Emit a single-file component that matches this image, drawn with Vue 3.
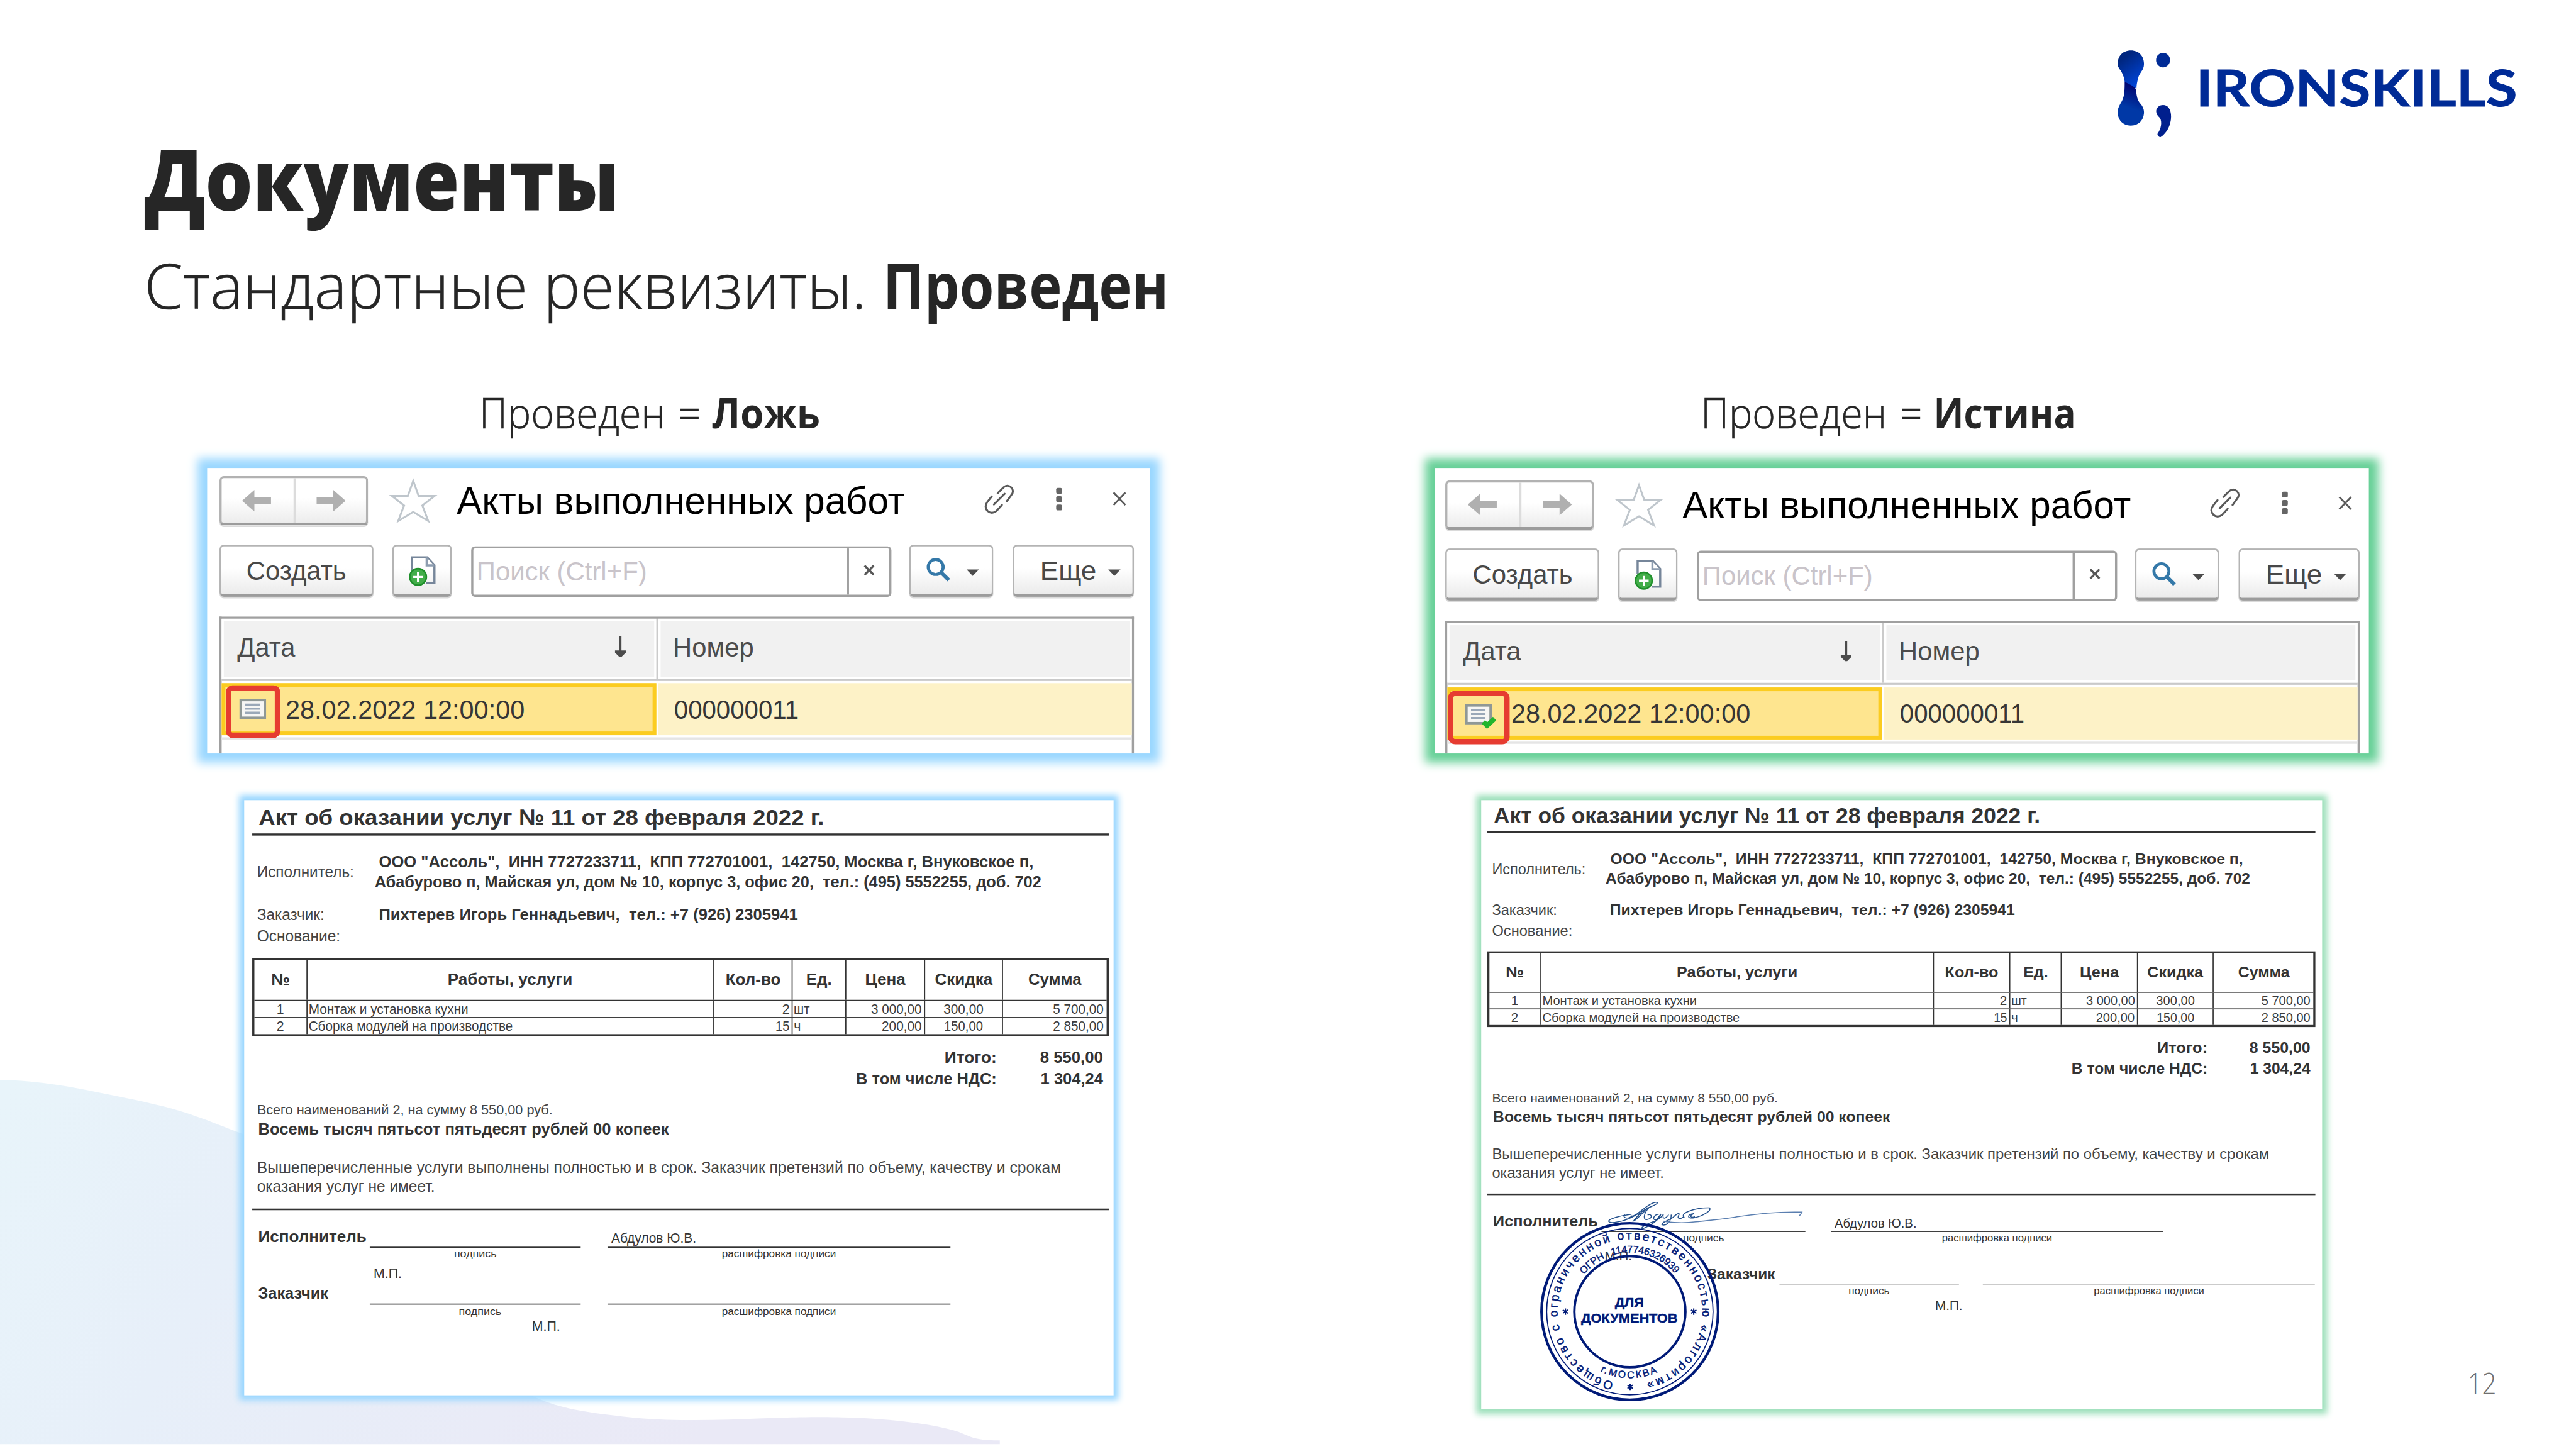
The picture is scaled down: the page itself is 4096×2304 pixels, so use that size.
<script setup>
// Stretches a text run horizontally so that its glyphs span the given width.
const fit = (el, { value }) => {
  if (!value) return
  const size = parseFloat(getComputedStyle(el).fontSize)
  const natural = el.offsetWidth
  const target = value + size * 0.085
  el.style.transform = `scaleX(${(target / natural).toFixed(4)})`
  el.style.marginRight = `${(target - natural).toFixed(2)}px`
}
const vFit = { mounted: fit }

const columns = [
  { id: 'draft', value: 'Ложь', valueWidth: 194, posted: false },
  { id: 'posted', value: 'Истина', valueWidth: 258, posted: true }
]

const sellerLines = [
  { text: 'ООО "Ассоль",  ИНН 7727233711,  КПП 772701001,  142750, Москва г, Внуковское п,', w: 1217, indent: 8.5 },
  { text: 'Абабурово п, Майская ул, дом № 10, корпус 3, офис 20,  тел.: (495) 5552255, доб. 702', w: 1240, indent: 0 }
]

const heads = [
  { t: '№', w: 32 },
  { t: 'Работы, услуги', w: 230 },
  { t: 'Кол-во', w: 100 },
  { t: 'Ед.', w: 45 },
  { t: 'Цена', w: 73 },
  { t: 'Скидка', w: 105 },
  { t: 'Сумма', w: 97 }
]
const rows = [
  [{ t: '1' }, { t: 'Монтаж и установка кухни', w: 296 }, { t: '2' }, { t: 'шт', w: 28 }, { t: '3 000,00', w: 92 }, { t: '300,00', w: 72 }, { t: '5 700,00', w: 92 }],
  [{ t: '2' }, { t: 'Сборка модулей на производстве', w: 378 }, { t: '15', w: 24 }, { t: 'ч' }, { t: '200,00', w: 72 }, { t: '150,00', w: 70 }, { t: '2 850,00', w: 92 }]
]
const totals = [
  { label: 'Итого:', lw: 95, value: '8 550,00', vw: 115 },
  { label: 'В том числе НДС:', lw: 260, value: '1 304,24', vw: 114 }
]
</script>

<template>
  <div class="viewport">
    <main class="slide">
      <svg class="blob" viewBox="0 0 1900 700" aria-hidden="true">
        <defs>
          <linearGradient id="blobFill" gradientUnits="userSpaceOnUse" x1="0" y1="60" x2="1250" y2="780">
            <stop offset="0" stop-color="#e8f4fa" />
            <stop offset="0.35" stop-color="#e7eff9" />
            <stop offset="0.75" stop-color="#e9ebf7" />
            <stop offset="1" stop-color="#eae9f6" />
          </linearGradient>
        </defs>
        <path fill="url(#blobFill)" d="M0 12 C50 13 110 20 166 32 C235 46 290 56 345 73 C390 88 420 101 453 113 C640 200 800 480 992 601 C1035 622 1080 630 1148 638 C1230 649 1330 647 1420 643 C1500 640 1540 640 1569 641 C1640 642 1740 652 1786 668 C1810 677 1815 684 1863 684 V691 H0Z" />
      </svg>

      <header class="head">
        <div class="titles">
          <h1><span v-fit="871">Документы</span></h1>
          <p class="subtitle">
            <span class="plain"><span v-fit="1335">Стандартные реквизиты.</span></span>
            <b v-fit="523">Проведен</b>
          </p>
        </div>
        <div class="logo">
          <svg viewBox="3945 90 106 170" aria-hidden="true">
            <defs>
              <linearGradient id="boneTop" x1="0" y1="0" x2="0.5" y2="1">
                <stop offset="0.25" stop-color="#00267f" /><stop offset="1" stop-color="#0044d6" />
              </linearGradient>
              <linearGradient id="boneBottom" x1="0.6" y1="0" x2="0.4" y2="1">
                <stop offset="0.08" stop-color="#000673" /><stop offset="0.6" stop-color="#0038a6" />
              </linearGradient>
            </defs>
            <path fill="url(#boneTop)" d="M3971.500 94 C3987 94 3996 105 3996 119 C3996 132 3988 134 3985 146 C3983 154 3982 159 3982 165 L3960 153 C3960 147 3957 139 3953 132 C3949 127 3947 124 3947 119 C3947 105 3956 94 3971.500 94Z" />
            <path fill="url(#boneBottom)" d="M3960 153 C3966 155 3978 161 3981 166 C3982 176 3983 184 3987 190 C3992 196 3996 201 3996 209 C3996 223 3987 234 3971.500 234 C3956 234 3947 223 3947 209 C3947 201 3951 195 3955 188 C3960 179 3960 165 3960 153Z" />
            <ellipse cx="4031.500" cy="112" rx="13" ry="13.700" fill="#002b96" />
            <path fill="#001f8d" d="M4031.500 195.700 C4041 195.700 4046.500 204 4046.500 217 C4046.500 234 4038 248 4027 255.500 Q4022 255.500 4021 249.500 C4028 240 4030 228 4026 220 C4021 216 4018.700 212 4018.700 207.500 C4018.700 201 4024 195.700 4031.500 195.700Z" />
          </svg>
          <div class="wordmark"><span v-fit="590">IRONSKILLS</span></div>
        </div>
      </header>

      <section class="columns">
        <article v-for="c in columns" :key="c.id" class="column" :class="c.id">
          <h2>
            <span class="plain"><span v-fit="340">Проведен</span></span><span class="eq"><span v-fit="36">=</span></span><b v-fit="c.valueWidth">{{ c.value }}</b>
          </h2>

          <div class="window">
            <div class="window-title">
              <div class="nav">
                <svg viewBox="0 0 54 40"><path d="M0 20 L23 0 V14 H54 V26 H23 V40Z" /></svg>
                <svg viewBox="0 0 54 40"><path d="M54 20 L31 0 V14 H0 V26 H31 V40Z" /></svg>
              </div>
              <svg class="star" viewBox="0 0 86 82"><path d="M43 4 L53 32 H83 L60 50 L71 79 L43 62 L15 79 L26 50 L3 32 H33Z" /></svg>
              <div class="caption"><span v-fit="829">Акты выполненных работ</span></div>
              <svg class="link" viewBox="0 0 56 56">
                <path d="M18 38 L38 18 M25 17 L36 6 Q43 0 50 6 Q57 13 50 21 L42 32 M14 23 L6 33 Q-1 42 6 50 Q14 57 23 50 L33 39" />
              </svg>
              <svg class="dots" viewBox="0 0 11 42"><rect y="0" width="11" height="11" rx="3" /><rect y="15.500" width="11" height="11" rx="3" /><rect y="31" width="11" height="11" rx="3" /></svg>
              <svg class="close" viewBox="0 0 26 27"><path d="M2 2 L24 25 M24 2 L2 25" /></svg>
            </div>

            <div class="toolbar">
              <div class="btn create"><span v-fit="182">Создать</span></div>
              <div class="btn copy">
                <svg viewBox="0 0 50 56">
                  <path class="sheet-line" d="M5.500 26 V2.500 H34 L47.500 17 V50 H32" />
                  <path class="sheet-fold" d="M33 3 V17.500 H47" />
                  <circle cx="17" cy="39" r="15.500" />
                  <path class="plus" d="M17 30 V48 M8 39 H26" />
                </svg>
              </div>
              <div class="search">
                <div class="hint"><span v-fit="313">Поиск (Ctrl+F)</span></div>
                <div class="clear"><svg viewBox="0 0 21 21"><path d="M2 2 L19 19 M19 2 L2 19" /></svg></div>
              </div>
              <div class="btn find">
                <svg class="lens" viewBox="0 0 45 46"><circle cx="17.500" cy="17.500" r="14" /><path d="M28 28 L42 42" /></svg>
                <svg class="tri" viewBox="0 0 23 12"><path d="M0 0 H23 L11.500 12Z" /></svg>
              </div>
              <div class="btn more">
                <span v-fit="101">Еще</span>
                <svg class="tri" viewBox="0 0 23 12"><path d="M0 0 H23 L11.500 12Z" /></svg>
              </div>
            </div>

            <div class="list">
              <div class="list-head">
                <div class="cell date">
                  <span v-fit="104">Дата</span>
                  <svg class="sort" viewBox="0 0 20 38"><path d="M8 0 H12 V26 H20 V30 L12 38 H8 L0 30 V26 H8Z" /></svg>
                </div>
                <div class="cell number"><span v-fit="146">Номер</span></div>
              </div>
              <div class="list-row">
                <div class="cell date">
                  <div class="mark">
                    <svg viewBox="0 0 60 48">
                      <rect class="page" x="2.500" y="2.500" width="45" height="33" />
                      <path class="lines" d="M11 11 H38 M11 18.500 H38 M11 26 H38" />
                      <path v-if="c.posted" class="tick" d="M34 33 L41 40 L55 27" />
                    </svg>
                  </div>
                  <span v-fit="441">28.02.2022 12:00:00</span>
                </div>
                <div class="cell number"><span v-fit="228">000000011</span></div>
              </div>
              <div class="list-line"></div>
            </div>
          </div>

          <div class="sheet">
            <div class="act">
              <h3><span v-fit="1050">Акт об оказании услуг № 11 от 28 февраля 2022 г.</span></h3>
              <div class="rule first"></div>

              <div class="party seller">
                <span class="who"><span v-fit="178">Исполнитель:</span></span>
                <div class="details">
                  <div v-for="l in sellerLines" :key="l.w" :style="{ paddingLeft: l.indent + 'px' }"><span v-fit="l.w">{{ l.text }}</span></div>
                </div>
              </div>
              <div class="party buyer">
                <span class="who"><span v-fit="122.500">Заказчик:</span></span>
                <div class="details offset"><span v-fit="778">{{ 'Пихтерев Игорь Геннадьевич,  тел.: +7 (926) 2305941' }}</span></div>
              </div>
              <div class="party"><span class="who"><span v-fit="153">Основание:</span></span></div>

              <div class="grid">
                <div class="grid-row grid-head">
                  <div v-for="h in heads" :key="h.t"><span v-fit="h.w">{{ h.t }}</span></div>
                </div>
                <div v-for="(r, i) in rows" :key="i" class="grid-row grid-body">
                  <div v-for="(v, j) in r" :key="j"><span v-fit="v.w">{{ v.t }}</span></div>
                </div>
              </div>

              <div class="totals">
                <div v-for="t in totals" :key="t.label">
                  <span class="total-label"><span v-fit="t.lw">{{ t.label }}</span></span>
                  <span class="total-value"><span v-fit="t.vw">{{ t.value }}</span></span>
                </div>
              </div>

              <p class="count"><span v-fit="549">Всего наименований 2, на сумму 8 550,00 руб.</span></p>
              <p class="words"><span v-fit="763">Восемь тысяч пятьсот пятьдесят рублей 00 копеек</span></p>
              <p class="terms">
                <span v-fit="1496">Вышеперечисленные услуги выполнены полностью и в срок. Заказчик претензий по объему, качеству и срокам</span><br />
                <span v-fit="329">оказания услуг не имеет.</span>
              </p>
              <div class="rule second"></div>

              <div class="sign performer">
                <b><span v-fit="199">Исполнитель</span></b>
                <i class="line hand"></i>
                <i class="line name"><span v-fit="156">Абдулов Ю.В.</span></i>
              </div>
              <div class="sign-notes performer">
                <span><span v-fit="78">подпись</span></span>
                <span><span v-fit="211">расшифровка подписи</span></span>
              </div>
              <div class="seal-place"><span v-fit="51">М.П.</span></div>
              <div class="sign customer">
                <b><span v-fit="128">Заказчик</span></b>
                <i class="line hand"></i>
                <i class="line name"></i>
              </div>
              <div class="sign-notes customer">
                <span><span v-fit="78">подпись</span></span>
                <span><span v-fit="211">расшифровка подписи</span></span>
              </div>
              <div class="seal-place last"><span v-fit="51">М.П.</span></div>
            </div>

            <svg v-if="c.posted" class="stamp" viewBox="2860 2220 510 400">
              <g class="signature" transform="translate(2840 2210) scale(.33333)">
                <path d="M600 158 C540 165 466 185 473 198 C480 212 560 200 615 168 C655 140 715 82 745 92 C748 106 690 116 655 146 C640 162 618 186 612 195 C625 190 650 166 690 120" />
                <path d="M562 158 C545 180 585 188 605 165 M588 178 C610 165 640 150 680 148 M700 118 C665 155 662 195 692 186 C722 176 712 152 690 162" />
                <path d="M752 158 C722 160 712 196 742 186 L765 156 C755 190 705 222 665 238 C640 240 680 212 725 198 C755 188 775 165 778 158 C770 186 790 186 808 160 M822 160 C824 200 792 226 770 216 C768 202 800 196 832 176 C850 155 872 146 866 160 C850 184 872 186 892 172" />
                <path d="M896 176 C862 152 960 120 1036 122 C1052 136 1000 168 950 178 C910 184 908 160 948 154 C920 166 930 180 955 172" />
                <path class="tail" d="M780 196 C820 206 900 208 960 200 C1050 190 1130 184 1190 172 C1280 160 1400 142 1553 146 C1550 152 1546 158 1538 167" />
              </g>
              <g class="seal" transform="translate(3037 2444)">
                <defs>
                  <path id="ringOuter" d="M-30.400 131.500 A135 135 0 1 1 26.900 132.300" />
                  <path id="ringInner" d="M-85.500 -69.200 A110 110 0 0 1 84.900 -70" />
                  <path id="ringCity" d="M-55.300 111 A124 124 0 0 0 52.400 112.400" />
                </defs>
                <circle r="164.500" stroke-width="5" />
                <circle r="155" stroke-width="2" />
                <circle r="103.500" stroke-width="4.500" />
                <text class="ring"><textPath href="#ringOuter" textLength="786">Общество с ограниченной ответственностью «Алгоритм»</textPath></text>
                <text class="code"><textPath href="#ringInner" textLength="50">ОГРН</textPath></text>
                <text class="code"><textPath href="#ringInner" startOffset="64" textLength="130">1147746326939</textPath></text>
                <text class="city"><textPath href="#ringCity" textLength="110">г.МОСКВА</textPath></text>
                <text class="core" x="-1" y="-8.500" text-anchor="middle" textLength="54" lengthAdjust="spacingAndGlyphs">ДЛЯ</text>
                <text class="core" x="-1" y="21" text-anchor="middle" textLength="180" lengthAdjust="spacingAndGlyphs">ДОКУМЕНТОВ</text>
                <path class="asterisk" d="M-120 -6 V6 M-125 -3 L-115 3 M-125 3 L-115 -3 M119 -6 V6 M114 -3 L124 3 M114 3 L124 -3 M.500 134 V146 M-4.500 137 L5.500 143 M-4.500 143 L5.500 137" />
              </g>
            </svg>
          </div>
        </article>
      </section>

      <div class="page-number"><span v-fit="49">12</span></div>
    </main>
  </div>
</template>

<style>
html, body { margin: 0; background: #fff; }
</style>

<style scoped>
.viewport { width: 4096px; height: 2304px; overflow: hidden; background: #fff; }
.slide {
  position: relative; width: 4800px; height: 2700px; overflow: hidden;
  transform: scale(.853333); transform-origin: 0 0;
  color: #262626; font-family: "Open Sans", "Noto Sans", sans-serif;
}
.slide span, .slide b { display: inline-block; white-space: pre; transform-origin: 0 50%; }
h1, h2, h3, p { margin: 0; font-weight: inherit; }
svg { display: block; overflow: visible; flex: none; }

.blob { position: absolute; left: 0; top: 2000px; width: 1900px; height: 700px; overflow: hidden; }

.head { display: flex; justify-content: space-between; height: 722.7px; position: relative; }
.titles { padding: 241.7px 0 0 269px; }
h1 { font-size: 158px; line-height: 180px; font-weight: 800; }
.subtitle { margin-top: 42.9px; font-size: 117px; line-height: 130px; display: flex; }
.subtitle .plain { font-weight: 300; width: 1376px; -webkit-text-stroke: .8px #262626; }
.subtitle b { font-weight: 700; }
.logo { display: flex; padding: 90px 108px 0 0; }
.logo svg { width: 106px; height: 170px; }
.wordmark { margin: 20.5px 0 0 42px; width: 600px; font: 700 95px/100px Lato, sans-serif; color: #002b96; -webkit-text-stroke: 1px #002b96; }

.columns { display: flex; position: relative; }
.column.draft { margin-left: 386px; width: 1757px; }
.column.posted { margin-left: 531px; width: 1740px; }
h2 { display: flex; font-size: 78px; line-height: 90px; padding-left: 507px; }
.posted h2 { padding-left: 495px; }
h2 .plain { width: 371px; font-weight: 300; -webkit-text-stroke: .7px #262626; }
h2 .eq { width: 63px; font-weight: 400; }
h2 b { font-weight: 700; }

.window {
  box-sizing: border-box; margin-top: 59.3px; height: 532px; padding: 15.4px 0 0 23px; background: #fff;
  box-shadow: 0 0 17px 18px #99d7ff; font-family: "Liberation Sans", Arial, sans-serif;
}
.posted .window { padding: 22.8px 0 0 19.4px; box-shadow: 0 0 17px 18px #66d097; }
.window-title, .toolbar, .list { width: 1704px; }
.window-title { display: flex; align-items: center; height: 92px; }
.nav {
  box-sizing: border-box; display: flex; align-items: center; width: 277px; height: 92px; border: 4px solid #b2b2b2;
  border-bottom: 5px solid #9c9c9c; border-radius: 8px; background: linear-gradient(#fff 45%, #ececec); box-shadow: 0 3px 0 #dadada; position: relative;
  justify-content: space-around; padding: 0 10px;
}
.nav::after { content: ""; position: absolute; left: 50%; top: 0; bottom: 0; width: 4px; margin-left: -1px; background: #dcdcdc; }
.nav svg { width: 54px; height: 40px; fill: #b0b0b0; }
.nav svg + svg { margin-left: 30px; }
.star { width: 86px; height: 82px; margin: 0 38px 0 41px; fill: none; stroke: #bfc6cc; stroke-width: 3.5; }
.caption { width: 983px; font-size: 72px; line-height: 90px; color: #000; }
.link { width: 56px; height: 56px; margin-bottom: 7px; fill: none; stroke: #5a5a5a; stroke-width: 3.6; stroke-linecap: round; }
.dots { width: 11px; height: 42px; margin: 0 94px 7px 78px; fill: #666; }
.close { width: 26px; height: 27px; margin-bottom: 7px; fill: none; stroke: #5a5a5a; stroke-width: 3.4; }

.toolbar { display: flex; margin-top: 35.5px; height: 99.5px; font-size: 50px; line-height: 60px; color: #484848; }
.btn {
  box-sizing: border-box; display: flex; align-items: center; justify-content: center; height: 97px; border: 3.5px solid #b4b4b4;
  border-bottom: 5px solid #9c9c9c; border-radius: 8px; background: linear-gradient(#fff 45%, #ebebeb); box-shadow: 0 3px 0 #dadada;
}
.btn > span { margin-top: 3px; }
.create { width: 287px; }
.copy { width: 111px; margin-left: 35px; }
.copy svg { width: 50px; height: 56px; margin-top: 3px; }
.sheet-line { fill: none; stroke: #76869a; stroke-width: 4; }
.sheet-fold { fill: #fff; stroke: #8d9db0; stroke-width: 4; }
.copy circle { fill: #42ad49; stroke: #1f8f2b; stroke-width: 3; }
.plus { stroke: #fff; stroke-width: 4; }
.search {
  box-sizing: border-box; display: flex; align-items: center; width: 783px; height: 94px; margin: 3.5px 0 0 36px; padding-left: 6px;
  border: 4px solid #a0a0a0; border-radius: 7px; background: #fff; color: #c9c4ca;
}
.hint { width: 690px; flex: none; }
.clear { display: flex; align-items: center; justify-content: center; flex: 1; align-self: stretch; border-left: 4px solid #a0a0a0; }
.clear svg { width: 21px; height: 21px; margin-bottom: 6px; fill: none; stroke: #585858; stroke-width: 4; }
.find { width: 157px; margin-left: 33px; }
.lens { width: 45px; height: 46px; fill: none; stroke: #3478a8; stroke-width: 7; }
.lens circle { stroke-width: 5.5; }
.tri { width: 23px; height: 12px; margin: 10px 0 0 30px; fill: #4c4c4c; }
.find .tri { margin-right: -5px; }
.more { width: 226px; margin-left: 36px; padding-left: 26px; }
.more .tri { margin-left: 22px; }

.list { box-sizing: border-box; margin-top: 35px; height: 254.6px; border: 4px solid #a0a0a0; border-bottom: 0; font-size: 50.5px; }
.posted .list { height: 247.2px; }
.list-head { display: flex; height: 111.500px; border-bottom: 4px solid #c9c9c9; color: #4c4c4c; line-height: 98px; }
.list-head .cell { box-sizing: border-box; border: 4px solid #fff; background: #f1f1f1; display: flex; }
.list-head .date { width: 809.5px; padding-left: 25px; justify-content: space-between; }
.list-head .number { flex: 1; box-shadow: -4px 0 0 #cbcbcb; margin-left: 4px; padding-left: 23px; }
.sort { width: 20px; height: 38px; margin: 29px 53px 0 0; fill: #4c4c4c; }
.list-row { display: flex; gap: 4px; margin-top: 4.5px; height: 97px; color: #363636; line-height: 97px; }
.list-row .cell { box-sizing: border-box; display: flex; }
.list-row .date { width: 809.5px; border: 7px solid #fbcc20; background: #fee58f; line-height: 83px; }
.list-row .number { flex: 1; background: #fdf2c7; padding-left: 29px; }
.mark { box-sizing: border-box; flex: none; width: 101px; height: 98px; margin: -3px 10px 0 1px; border: 10.5px solid #e63c31; border-radius: 12px; }
.posted .mark { width: 115px; height: 100px; margin: -1px 3px 0 -6px; border-radius: 14px; }
.mark svg { width: 60px; height: 48px; margin: 15px 0 0 15px; }
.posted .mark svg { margin-left: 22px; }
.page { fill: #f6f6f4; stroke: #8f9896; stroke-width: 4.5; }
.lines { stroke: #9aa8b8; stroke-width: 4; }
.tick { fill: none; stroke: #22b52d; stroke-width: 9; }
.list-line { height: 4px; margin-top: 4px; background: #e5e5e5; }

.sheet {
  position: relative; margin: 87.5px 0 0 68.6px; width: 1620px; height: 1109px; background: #fff; box-shadow: 0 0 12px 10px #97d6ff;
  font-family: "Liberation Sans", Arial, sans-serif; color: #333;
}
.posted .sheet { margin-left: 86.3px; width: 1566.7px; height: 1134.2px; box-shadow: 0 0 12px 10px #9adfb9; }
.act { width: 1596.4px; padding: 7.7px 0 0 15px; font-size: 30px; }
.posted .act { transform: translate(-3px, -1.6px) scale(.9667); transform-origin: 0 0; }
h3 { padding-left: 12px; font-size: 42px; line-height: 48px; font-weight: 700; }
.rule { background: #333; }
.rule.first { height: 4px; margin-top: 5.5px; }
.rule.second { height: 3px; margin-top: 22.4px; }
.party { display: flex; align-items: center; line-height: 39.5px; }
.who { width: 219px; padding-left: 9px; font-size: 29.500px; color: #444; }
.details { font-weight: 700; }
.details.offset { margin-left: 8px; }
.seller { margin-top: 30.7px; line-height: 37.3px; }
.seller + .party { margin-top: 22.9px; }
.grid { margin-top: 20.7px; border: 4px solid #333; }
.grid-row { display: grid; grid-template-columns: 97.5px 757.5px 146.7px 99.7px 146.7px 145.8px 1fr; }
.grid-row > div { border-left: 2px solid #333; text-align: center; }
.grid-row > div:first-child { border-left: 0; }
.grid-head { font-weight: 700; line-height: 72px; height: 74px; border-bottom: 2px solid #333; }
.grid-body { font-size: 25px; line-height: 30px; height: 30px; color: #3c3c3c; }
.grid-body + .grid-body { border-top: 2px solid #333; }
.grid-body > div:nth-child(2), .grid-body > div:nth-child(4) { text-align: left; padding-left: 2px; }
.grid-body > div:nth-child(3), .grid-body > div:nth-child(5) { text-align: right; padding-right: 4px; }
.grid-body > div:nth-child(7) { text-align: right; padding-right: 6px; }
.totals { margin-top: 20.1px; font-weight: 700; line-height: 39.2px; }
.totals > div { display: flex; text-align: right; }
.total-label { width: 1388px; }
.total-value { width: 198px; }
.count { margin-top: 18.5px; padding-left: 9px; font-size: 25.5px; line-height: 38px; height: 38px; color: #444; }
.words { padding-left: 11px; font-weight: 700; line-height: 35.2px; height: 35.2px; }
.terms { margin-top: 36.6px; padding-left: 9px; font-size: 29.5px; line-height: 36px; height: 72px; color: #444; }
.sign { display: flex; align-items: flex-end; height: 70.6px; }
.sign b { box-sizing: border-box; width: 219.7px; padding: 0 0 2.600px 11px; line-height: 36px; }
.line { box-sizing: border-box; height: 33px; border-bottom: 2.4px solid #333; font-style: normal; font-size: 25px; line-height: 31px; }
.line.hand { width: 393.2px; }
.line.name { width: 639.6px; margin-left: 49.3px; padding-left: 7px; }
.sign-notes { display: flex; gap: 49.3px; padding-left: 219.7px; font-size: 20px; line-height: 22px; height: 22px; text-align: center; }
.sign-notes > span:first-child { width: 393.2px; }
.sign-notes > span:last-child { width: 639.6px; }
.draft .sign-notes.customer > span:first-child { width: 411.2px; margin-right: -18px; }
.seal-place { margin-top: 9.4px; padding-left: 226px; font-size: 25px; line-height: 30px; height: 30px; }
.sign.customer { height: 44.2px; }
.sign-notes.customer { margin-top: 1px; }
.seal-place.last { margin-top: 1.700px; padding-left: 521px; }
.posted .sign.customer { height: 40px; padding-left: 414px; }
.posted .sign.customer b { width: 148.6px; padding-left: 10px; }
.posted .customer .line { border-bottom-width: 1.3px; }
.posted .customer .line.hand { width: 346.3px; }
.posted .customer .line.name { margin-left: 46.5px; }
.posted .sign-notes.customer { padding-left: 562.600px; gap: 46.5px; }
.posted .sign-notes.customer > span:first-child { width: 346.3px; }
.posted .seal-place.last { padding-left: 863px; }

.stamp { position: absolute; left: 99.7px; top: 728.5px; width: 510px; height: 400px; }
.signature path { fill: none; stroke: #23508c; stroke-width: 5.5; }
.signature .tail { stroke: #5b7fb0; }
.seal circle { fill: none; stroke: #001a78; }
.seal text { fill: #001a78; stroke: #001a78; stroke-width: .6; font-size: 18.5px; }
.seal .ring { font-size: 22.5px; }
.seal .core { font-size: 24.500px; font-weight: 700; }
.asterisk { stroke: #001a78; stroke-width: 2.4; }

.page-number { position: absolute; left: 4598px; top: 2536px; font-size: 56px; line-height: 80px; font-weight: 300; color: #6f6f6f; }
</style>
